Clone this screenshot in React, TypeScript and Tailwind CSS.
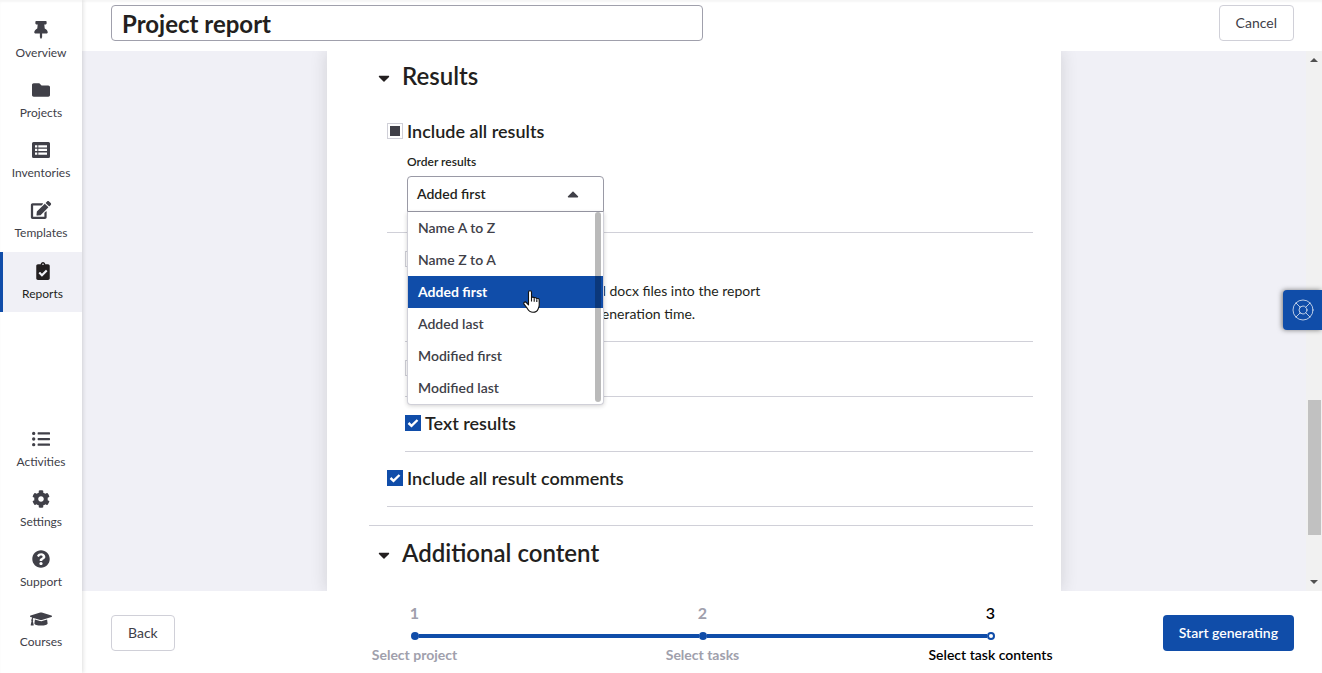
import { useState } from 'react'
import type { ReactNode } from 'react'
import type { IconType } from 'react-icons'
import {
  FaCaretDown,
  FaCaretUp,
  FaClipboardCheck,
  FaCog,
  FaEdit,
  FaFolder,
  FaGraduationCap,
  FaListUl,
  FaQuestionCircle,
  FaThumbtack,
} from 'react-icons/fa'
import { LifeBuoy } from 'lucide-react'

interface NavItem {
  label: string
  icon: IconType
}

function InventoryIcon({ className }: { className?: string }) {
  return (
    <svg className={className} width="18" height="18" viewBox="0 0 18 18" fill="currentColor" aria-hidden="true">
      <path
        fillRule="evenodd"
        d="M1.500 1h15A1.500 1.500 0 0 1 18 2.500v13a1.500 1.500 0 0 1-1.500 1.500h-15A1.500 1.500 0 0 1 0 15.500v-13A1.500 1.500 0 0 1 1.500 1zM3 4.200v2.300h2.300V4.200zM6.300 4.200v2.300H15V4.200zM3 7.800v2.300h2.300V7.800zM6.300 7.800v2.300H15V7.800zM3 11.400v2.300h2.300v-2.300zM6.300 11.400v2.300H15v-2.300z"
      />
    </svg>
  )
}

const MAIN_NAV: NavItem[] = [
  { label: 'Overview', icon: FaThumbtack },
  { label: 'Projects', icon: FaFolder },
  { label: 'Inventories', icon: InventoryIcon },
  { label: 'Templates', icon: FaEdit },
  { label: 'Reports', icon: FaClipboardCheck },
]

const SECONDARY_NAV: NavItem[] = [
  { label: 'Activities', icon: FaListUl },
  { label: 'Settings', icon: FaCog },
  { label: 'Support', icon: FaQuestionCircle },
  { label: 'Courses', icon: FaGraduationCap },
]

// these two glyphs are wider than they are tall
const WIDE_ICONS: IconType[] = [FaEdit, FaGraduationCap]

const ORDER_OPTIONS = ['Name A to Z', 'Name Z to A', 'Added first', 'Added last', 'Modified first', 'Modified last']

const STEPS = ['Select project', 'Select tasks', 'Select task contents']

function NavLink({ item, active }: { item: NavItem; active: boolean }) {
  const Icon = item.icon
  return (
    <a
      href={`#${item.label.toLowerCase()}`}
      aria-current={active ? 'page' : undefined}
      className={
        active
          ? 'flex h-[60px] flex-col items-center gap-1.5 border-l-[3px] border-[#104da9] bg-[#f0f0f6] pt-[10px] text-[#231f20]'
          : 'flex h-[60px] flex-col items-center gap-1.5 pt-[9px] text-[#404048]'
      }
    >
      <Icon className={WIDE_ICONS.includes(Icon) ? 'h-[18px] w-[22px]' : 'size-[18px]'} />
      <span className="text-xs leading-4">{item.label}</span>
    </a>
  )
}

function Check({
  label,
  name,
  checked,
  onChange,
  partial = false,
}: {
  label?: string
  name?: string
  checked: boolean
  onChange: () => void
  partial?: boolean
}) {
  return (
    <label className="flex h-6 items-center gap-1 text-lg leading-6 font-semibold">
      <span className="grid size-4">
        <input
          type="checkbox"
          aria-label={name}
          checked={checked}
          onChange={onChange}
          className="col-start-1 row-start-1 size-4 appearance-none border border-[#d0d0d8] bg-white checked:border-[#104da9] checked:bg-[#104da9]"
        />
        {partial && !checked && (
          <span className="pointer-events-none col-start-1 row-start-1 m-[3px] bg-[#404048]" />
        )}
        {checked && (
          <svg viewBox="0 0 16 16" className="pointer-events-none col-start-1 row-start-1 size-4" aria-hidden="true">
            <path d="M3.500 8 6.500 10.800 12.500 5" fill="none" stroke="#fff" strokeWidth="2.400" />
          </svg>
        )}
      </span>
      {label}
    </label>
  )
}

function SectionHeader({ children }: { children: ReactNode }) {
  return (
    <h2 className="text-2xl leading-8 font-semibold">
      <button type="button" className="flex items-center gap-3 pl-[9px]">
        <FaCaretDown className="mt-1 h-[18px] w-3" />
        {children}
      </button>
    </h2>
  )
}

function HandCursor() {
  return (
    <svg
      viewBox="0 0 17 23"
      className="pointer-events-none absolute top-[78px] left-[115px] h-[23px] w-[17px]"
      aria-hidden="true"
    >
      <path
        d="M5.500 13V2.200a1.500 1.500 0 0 1 3 0V8c.3-1.300 2.600-1.200 2.700.3.600-1 2.500-.8 2.600.6.700-.8 2.400-.4 2.400 1.100V15c0 2-.7 3-1.200 4.200-.6 1.500-2 3-5 3-3.200 0-4.600-1.800-5.700-3.800L1 14.200c-.9-1.600 1-3 2.300-1.700L5.500 14.800z"
        fill="#fff"
        stroke="#111"
        strokeWidth="1.100"
        strokeLinejoin="round"
      />
      <path d="M8.500 8v3.500M11.200 8.800v3M13.800 9.500V12" stroke="#111" strokeWidth="1.100" />
    </svg>
  )
}

function OrderSelect() {
  const [value, setValue] = useState('Added first')
  const [open, setOpen] = useState(true)

  return (
    <div className="relative w-[197px]">
      <button
        id="order-results"
        type="button"
        aria-haspopup="listbox"
        aria-expanded={open}
        onClick={() => setOpen(o => !o)}
        className="flex h-9 w-full items-center justify-between rounded-t-[4px] border border-[#9a9aa6] bg-white pr-6 pl-[9px] text-sm font-semibold"
      >
        {value}
        <FaCaretUp className="h-[18px] w-3 text-[#404048]" />
      </button>
      {open && (
        <div className="absolute top-9 left-0 z-10 w-full rounded-b-[4px] border border-t-0 border-[#d0d0d8] bg-white shadow-[0_1px_4px_rgba(35,31,32,0.2)]">
          <ul role="listbox" aria-labelledby="order-label">
            {ORDER_OPTIONS.map(option => (
              <li
                key={option}
                role="option"
                aria-selected={option === value}
                onClick={() => setValue(option)}
                className={
                  option === value
                    ? 'h-8 cursor-pointer bg-[#104da9] pl-[10px] text-sm leading-8 font-bold text-white'
                    : 'h-8 cursor-pointer pl-[10px] text-sm leading-8 font-semibold text-[#404048]'
                }
              >
                {option}
              </li>
            ))}
          </ul>
          <span className="pointer-events-none absolute top-0 right-0.5 bottom-0.5 w-1.5 rounded-full bg-black/27" />
          <HandCursor />
        </div>
      )}
    </div>
  )
}

function Stepper({ current }: { current: number }) {
  return (
    <ol className="flex w-full text-sm font-bold text-[#a0a0ac]">
      {STEPS.map((step, i) => (
        <li
          key={step}
          aria-current={i === current ? 'step' : undefined}
          className={
            i === current
              ? 'flex flex-1 flex-col items-center font-semibold text-black'
              : 'flex flex-1 flex-col items-center'
          }
        >
          <span className="text-base leading-6">{i + 1}</span>
          <span className="mt-[7px] mb-[5px] flex w-full items-center">
            <span className={i === 0 ? 'h-1 flex-1' : 'h-1 flex-1 bg-[#104da9]'} />
            <span
              className={
                i === current
                  ? 'size-2 rounded-full border-2 border-[#104da9] bg-white'
                  : 'size-2 rounded-full bg-[#104da9]'
              }
            />
            <span className={i === STEPS.length - 1 ? 'h-1 flex-1' : 'h-1 flex-1 bg-[#104da9]'} />
          </span>
          <span className="leading-5">{step}</span>
        </li>
      ))}
    </ol>
  )
}

export default function App() {
  const [title, setTitle] = useState('Project report')
  const [all, setAll] = useState(false)
  const [files, setFiles] = useState(false)
  const [tables, setTables] = useState(false)
  const [texts, setTexts] = useState(true)
  const [comments, setComments] = useState(true)

  return (
    <div className="flex h-screen overflow-hidden bg-white font-['Lato',sans-serif] text-[#231f20] shadow-[inset_0_2px_2px_rgba(0,0,0,0.04)]">
      <nav className="z-10 flex w-[82px] shrink-0 flex-col justify-between pt-3 pb-3 shadow-[1px_0_4px_rgba(35,31,32,0.15)]">
        <div>
          {MAIN_NAV.map(item => (
            <NavLink key={item.label} item={item} active={item.label === 'Reports'} />
          ))}
        </div>
        <div>
          {SECONDARY_NAV.map(item => (
            <NavLink key={item.label} item={item} active={false} />
          ))}
        </div>
      </nav>

      <div className="flex min-w-0 flex-1 flex-col">
        <header className="flex h-[51px] shrink-0 items-start justify-between pt-[5px] pr-7 pl-[29px]">
          <input
            aria-label="Report name"
            value={title}
            onChange={e => setTitle(e.target.value)}
            className="h-9 w-[592px] rounded-[4px] border border-[#a0a0ac] bg-white px-[10px] text-2xl font-bold"
          />
          <button type="button" className="h-9 rounded-[4px] border border-[#d0d0d8] px-4 text-sm text-[#404048]">
            Cancel
          </button>
        </header>

        <div className="flex min-h-0 flex-1 bg-[#f0f0f6]">
          <main className="min-w-0 flex-1 overflow-hidden">
            <div className="mx-auto h-full w-full max-w-[734px] bg-white pt-[9px] pr-7 pl-[42px] shadow-[0_0_16px_rgba(35,31,32,0.15)]">
              <SectionHeader>Results</SectionHeader>

              <div className="pl-[18px]">
                <div className="mt-[27px] border-b border-[#d0d0d8] pb-5">
                  <Check label="Include all results" partial checked={all} onChange={() => setAll(v => !v)} />
                  <div className="mt-[11px] pl-5">
                    <label
                      id="order-label"
                      htmlFor="order-results"
                      className="mb-1.5 block text-xs leading-4 font-semibold"
                    >
                      Order results
                    </label>
                    <OrderSelect />
                  </div>
                </div>

                <div className="pl-[18px]">
                  <div className="border-b border-[#d0d0d8] pt-[14px] pb-4">
                    <Check name="File results" checked={files} onChange={() => setFiles(v => !v)} />
                    <p className="mt-2 pl-[148px] text-sm leading-[23px]">
                      PDF and docx files into the report
                      <br />
                      report generation time.
                    </p>
                  </div>
                  <div className="border-b border-[#d0d0d8] pt-[14px] pb-4">
                    <Check name="Table results" checked={tables} onChange={() => setTables(v => !v)} />
                  </div>
                  <div className="border-b border-[#d0d0d8] pt-[14px] pb-4">
                    <Check label="Text results" checked={texts} onChange={() => setTexts(v => !v)} />
                  </div>
                </div>

                <div className="border-b border-[#d0d0d8] pt-[14px] pb-4">
                  <Check
                    label="Include all result comments"
                    checked={comments}
                    onChange={() => setComments(v => !v)}
                  />
                </div>
              </div>

              <div className="mt-[18px] border-t border-[#d0d0d8] pt-[11px]">
                <SectionHeader>Additional content</SectionHeader>
              </div>
            </div>
          </main>

          <div className="flex w-4 flex-col items-center bg-[#f1f1f1] py-[7px]" aria-hidden="true">
            <span className="border-x-4 border-b-4 border-x-transparent border-b-[#505050]" />
            <span className="mt-auto mb-[45px] h-[135px] w-[13px] bg-[#c1c1c1]" />
            <span className="border-x-4 border-t-4 border-x-transparent border-t-[#505050]" />
          </div>
        </div>

        <footer className="grid h-[82px] shrink-0 grid-cols-[1fr_minmax(0,864px)_1fr] items-center pt-0.5 pr-7 pl-[29px]">
          <button
            type="button"
            className="h-9 justify-self-start rounded-[4px] border border-[#d0d0d8] px-4 text-sm text-[#404048]"
          >
            Back
          </button>
          <Stepper current={2} />
          <button
            type="button"
            className="h-9 justify-self-end rounded-[4px] bg-[#104da9] px-4 text-sm font-semibold whitespace-nowrap text-white"
          >
            Start generating
          </button>
        </footer>
      </div>

      <button
        type="button"
        aria-label="Help"
        className="fixed top-[290px] right-0 z-20 flex h-10 w-[39px] items-center justify-center rounded-l-[4px] bg-[#104da9] text-white/70 shadow-[-1px_0_5px_rgba(0,0,0,0.5)]"
      >
        <LifeBuoy size={24} strokeWidth={1} />
      </button>
    </div>
  )
}
